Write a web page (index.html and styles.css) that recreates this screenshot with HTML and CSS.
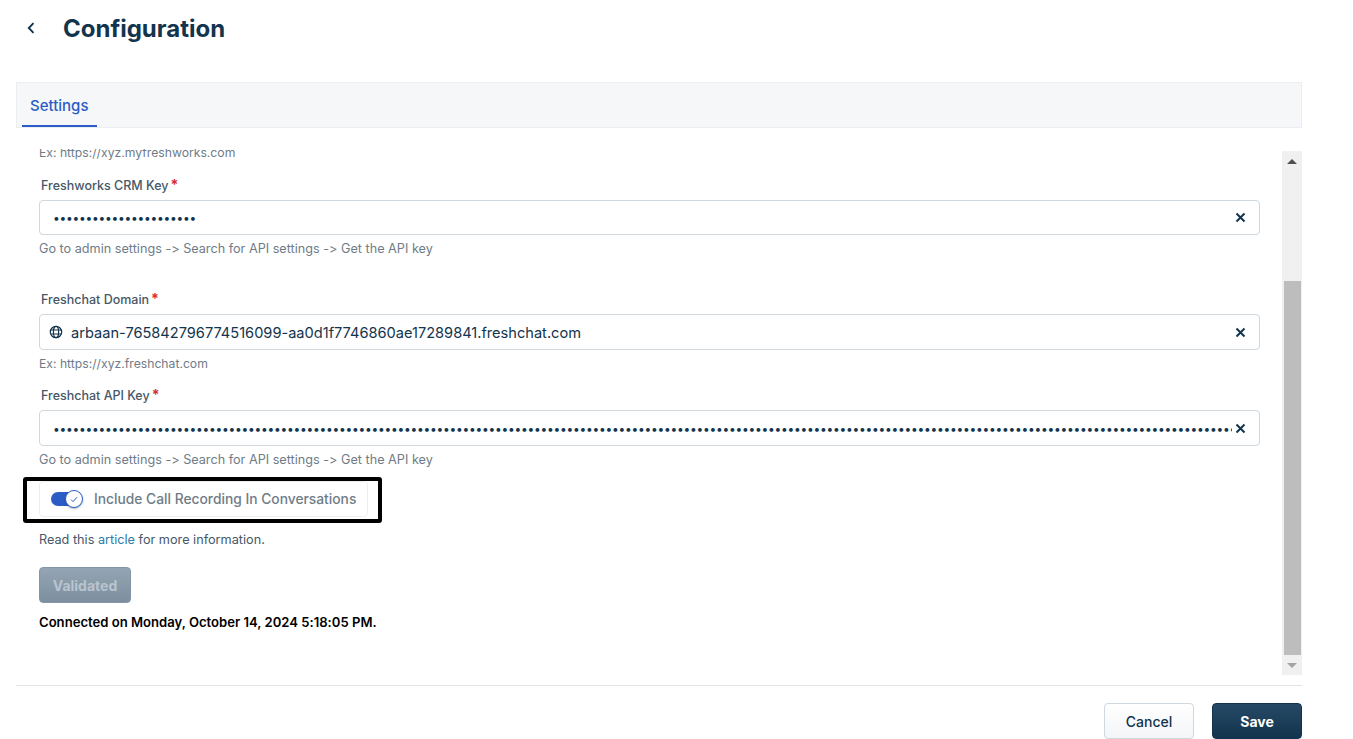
FILE: index.html
```html
<!DOCTYPE html>
<html lang="en">
<head>
<meta charset="utf-8">
<title>Configuration</title>
<link rel="stylesheet" href="styles.css">
</head>
<body>
<main class="page">
  <header class="page-header">
    <button class="back" aria-label="Back">
      <svg width="10" height="12" viewBox="0 0 10 12"><path d="M7.5 1.2 2.8 6l4.7 4.8" fill="none" stroke="#12344d" stroke-width="1.9"/></svg>
    </button>
    <h1>Configuration</h1>
  </header>
  <nav class="tabs"><a class="tab">Settings</a></nav>
  <section class="body-row">
    <div class="form">
      <p class="hint hint-ex hint-clipped">Ex: https://xyz.myfreshworks.com</p>
      <label class="label label-first">Freshworks CRM Key<span class="req">*</span></label>
      <div class="input input-short">
        <input class="field secret" type="password" value="abcdefghijklmnopqrstuv" readonly>
        <svg class="clear" width="11" height="11" viewBox="0 0 11 11"><path d="M1.5 1.5l8 8M9.5 1.5l-8 8" stroke="#12344d" stroke-width="2"/></svg>
      </div>
      <p class="hint">Go to admin settings -&gt; Search for API settings -&gt; Get the API key</p>
      <label class="label label-group">Freshchat Domain<span class="req">*</span></label>
      <div class="input">
        <svg class="globe" width="14" height="14" viewBox="0 0 14 14" fill="none" stroke="#12344d" stroke-width="1.2"><circle cx="7" cy="7" r="5.7"/><ellipse cx="7" cy="7" rx="2.6" ry="5.7"/><path d="M1.6 5h10.8M1.6 9h10.8"/></svg>
        <input class="field field-domain" type="text" value="arbaan-765842796774516099-aa0d1f7746860ae17289841.freshchat.com" readonly>
        <svg class="clear" width="11" height="11" viewBox="0 0 11 11"><path d="M1.5 1.5l8 8M9.5 1.5l-8 8" stroke="#12344d" stroke-width="2"/></svg>
      </div>
      <p class="hint hint-ex">Ex: https://xyz.freshchat.com</p>
      <label class="label label-next">Freshchat API Key<span class="req">*</span></label>
      <div class="input">
        <input class="field secret" type="password" value="aaaaaaaaaaaaaaaaaaaaaaaaaaaaaaaaaaaaaaaaaaaaaaaaaaaaaaaaaaaaaaaaaaaaaaaaaaaaaaaaaaaaaaaaaaaaaaaaaaaaaaaaaaaaaaaaaaaaaaaaaaaaaaaaaaaaaaaaaaaaaaaaaaaaaaaaaaaaaaaaaaaaaaaaaaaaaaaaaaaaaaaaaaaaaaaaaaaaa" readonly>
        <svg class="clear clear-tight" width="11" height="11" viewBox="0 0 11 11"><path d="M1.5 1.5l8 8M9.5 1.5l-8 8" stroke="#12344d" stroke-width="2"/></svg>
      </div>
      <p class="hint">Go to admin settings -&gt; Search for API settings -&gt; Get the API key</p>
      <div class="highlight">
        <div class="toggle-box">
          <span class="toggle">
            <span class="knob">
              <svg width="8" height="7" viewBox="0 0 8 7"><path d="M1 3.6 3 5.6 7 1.2" fill="none" stroke="#2c5cc5" stroke-width="1"/></svg>
            </span>
          </span>
          <span class="toggle-label">Include Call Recording In Conversations</span>
        </div>
      </div>
      <p class="info">Read this <a class="link">article</a> for more information.</p>
      <button class="validated" disabled>Validated</button>
      <p class="connected">Connected on Monday, October 14, 2024 5:18:05 PM.</p>
    </div>
    <div class="scrollbar">
      <span class="arrow-up"></span>
      <span class="track"></span>
      <span class="thumb"></span>
      <span class="arrow-down"></span>
    </div>
  </section>
  <footer class="footer">
    <button class="btn btn-cancel">Cancel</button>
    <button class="btn btn-save">Save</button>
  </footer>
</main>
</body>
</html>
```
FILE: styles.css
```css
* { box-sizing: border-box; }
html, body { margin: 0; height: 739px; overflow: hidden; background: #fff; }
body { font-family: Inter, "Noto Sans", sans-serif; color: #12344d; font-feature-settings: "calt" 0; }
.page { padding: 0 51px 0 16px; }
.page-header { height: 82px; display: flex; align-items: flex-start; padding-top: 13px; }
.back { width: 47px; height: 32px; padding: 0 0 0 10px; border: 0; background: none; text-align: left; display: flex; align-items: center; margin-top: -1px; }
h1 { margin: 0; font-size: 24px; line-height: 32px; font-weight: 700; color: #12344d; }
.tabs { height: 46px; background: #f5f7f9; border: 1px solid #ebeff3; padding-left: 5px; display: flex; }
.tab { display: block; height: 44px; padding: 1px 8px 0; line-height: 44px; font-size: 15px; font-weight: 500; color: #2c5cc5; border-bottom: 2px solid #2c5cc5; width: 75px; }
.body-row { height: 526px; margin-top: 21px; display: flex; }
.form { flex: 1; min-width: 0; height: 526px; overflow: hidden; padding: 0 22px 0 23px; }
.hint { margin: 0; font-size: 12.66px; line-height: 18px; color: #6f7c87; }
.hint-ex { font-size: 12.2px; }
.hint-clipped { margin-top: -5px; }
.label { display: block; height: 18px; margin-left: 2px; font-size: 12.5px; line-height: 18px; font-weight: 500; color: #475867; }
.label-first { margin-top: 15px; margin-bottom: 5px; }
.label-group { margin-top: 33px; margin-bottom: 5px; }
.label-next { margin-top: 14px; margin-bottom: 5px; }
.req { color: #d72d30; margin-left: 2px; font-weight: 700; font-size: 14px; line-height: 1; }
.input { height: 36px; border: 1px solid #cfd7df; border-radius: 4px; display: flex; align-items: center; padding: 0 13px 0 9px; margin-bottom: 5px; }
.input-short { height: 35px; }
.field { flex: 1; min-width: 0; border: 0; outline: 0; padding: 0; background: none; font-family: inherit; font-size: 14.6px; color: #12344d; }
.field-domain { padding-top: 2px; }
.secret { padding-left: 4px; font-size: 12px; letter-spacing: -0.25px; }
.globe { margin-right: 8px; flex: none; }
.clear { flex: none; margin-left: 8px; }
.clear-tight { margin-left: 3px; }
.highlight { width: 359px; height: 46px; margin: 8px 0 0 -16px; border: 4px solid #000; border-radius: 3px; padding-left: 12px; }
.toggle-box { width: 329px; height: 36px; border: 1px solid #ebeff3; border-radius: 4px; display: flex; align-items: center; padding-left: 11px; }
.toggle { width: 31px; height: 14px; border-radius: 7px; background: #2c5cc5; display: block; position: relative; flex: none; }
.knob { position: absolute; right: -1px; top: -2px; width: 18px; height: 18px; border-radius: 50%; background: #fff; border: 1px solid #2c5cc5; box-shadow: 0 1px 2px rgba(18,52,77,.35); display: flex; align-items: center; justify-content: center; }
.toggle-label { margin-left: 12px; font-size: 13.8px; font-weight: 500; color: #6f7c87; white-space: nowrap; }
.info { margin: 8px 0 0; font-size: 12.7px; line-height: 18px; color: #475867; }
.link { color: #2c7ba8; }
.validated { display: block; margin-top: 18px; width: 92px; height: 36px; border: 1px solid #8496a6; border-radius: 4px; background: linear-gradient(#94a4b3, #7d8f9f); color: #b9c4ce; font-family: inherit; font-size: 14px; font-weight: 700; padding: 0; }
.connected { margin: 10px 0 0; font-size: 13.1px; line-height: 18px; font-weight: 600; color: #000; }
.scrollbar { width: 20px; margin-top: 2px; background: #f0f0f0; display: flex; flex-direction: column; align-items: center; }
.arrow-up { margin-top: 8px; border: 5px solid transparent; border-top: 0; border-bottom: 5px solid #505050; }
.track { height: 117px; flex: none; }
.thumb { width: 17px; flex: 1; background: #bdbdbd; }
.arrow-down { margin: 8px 0 7px; border: 5px solid transparent; border-bottom: 0; border-top: 5px solid #a3a3a3; }
.footer { margin-top: 10px; border-top: 1px solid #e2e5e8; padding-top: 17px; display: flex; justify-content: flex-end; gap: 18px; }
.btn { width: 90px; height: 36px; border-radius: 4px; font-family: inherit; font-size: 14px; padding: 0; }
.btn-cancel { border: 1px solid #cfd7df; background: linear-gradient(#fff, #f3f5f7); color: #12344d; font-weight: 500; }
.btn-save { border: 1px solid #12344d; background: linear-gradient(#264966, #12344d); color: #fff; font-weight: 700; }
```
